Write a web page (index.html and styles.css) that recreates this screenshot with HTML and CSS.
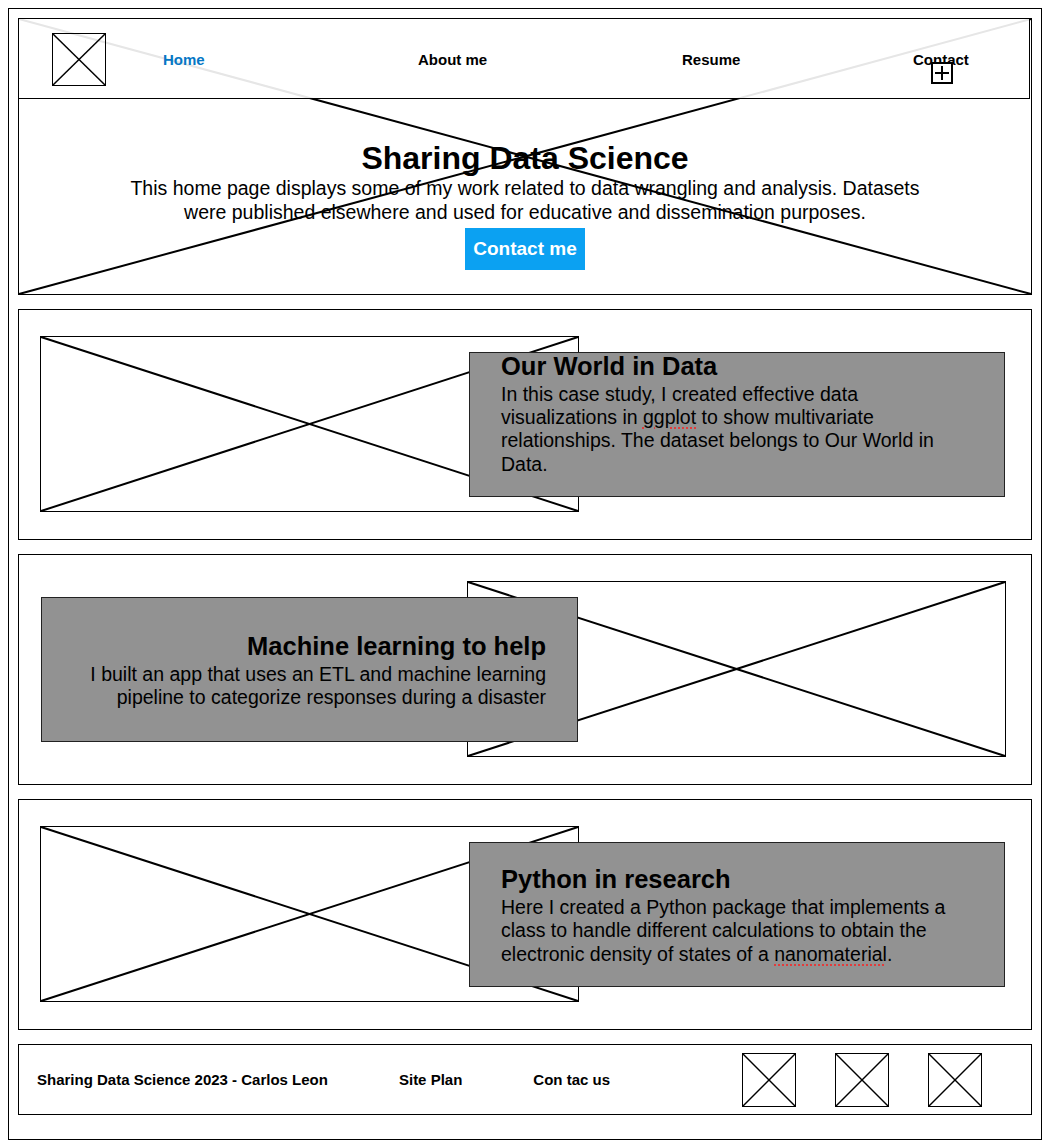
FILE: index.html
```html
<!DOCTYPE html>
<html lang="en">
<head>
    <meta charset="UTF-8">
    <meta name="viewport" content="width=device-width, initial-scale=1.0">
    <title>Sharing Data Science</title>
    <link rel="stylesheet" href="styles.css">
</head>
<body>

    <div class="frame">

        <section class="hero">
            <svg class="cross" viewBox="0 0 100 100" preserveAspectRatio="none">
                <line x1="0" y1="0" x2="100" y2="100" vector-effect="non-scaling-stroke"/>
                <line x1="100" y1="0" x2="0" y2="100" vector-effect="non-scaling-stroke"/>
            </svg>

            <nav class="topnav">
                <a href="#" class="logo ph">
                    <svg class="cross thin" viewBox="0 0 100 100" preserveAspectRatio="none">
                        <line x1="0" y1="0" x2="100" y2="100" vector-effect="non-scaling-stroke"/>
                        <line x1="100" y1="0" x2="0" y2="100" vector-effect="non-scaling-stroke"/>
                    </svg>
                </a>
                <a href="#" class="nav-link active">Home</a>
                <a href="#" class="nav-link">About me</a>
                <a href="#" class="nav-link">Resume</a>
                <a href="#" class="nav-link contact">Contact<span class="plus-box"></span></a>
            </nav>

            <div class="hero-body">
                <h1>Sharing Data Science</h1>
                <p>This home page displays some of my work related to data wrangling and analysis. Datasets were published elsewhere and used for educative and dissemination purposes.</p>
                <a href="#" class="btn">Contact me</a>
            </div>
        </section>

        <section class="project">
            <div class="project-img ph">
                <svg class="cross" viewBox="0 0 100 100" preserveAspectRatio="none">
                    <line x1="0" y1="0" x2="100" y2="100" vector-effect="non-scaling-stroke"/>
                    <line x1="100" y1="0" x2="0" y2="100" vector-effect="non-scaling-stroke"/>
                </svg>
            </div>
            <div class="panel panel-top">
                <h2>Our World in Data</h2>
                <p>In this case study, I created effective data visualizations in <span class="typo">ggplot</span> to show multivariate relationships. The dataset belongs to Our World in Data.</p>
            </div>
        </section>

        <section class="project flip">
            <div class="project-img ph">
                <svg class="cross" viewBox="0 0 100 100" preserveAspectRatio="none">
                    <line x1="0" y1="0" x2="100" y2="100" vector-effect="non-scaling-stroke"/>
                    <line x1="100" y1="0" x2="0" y2="100" vector-effect="non-scaling-stroke"/>
                </svg>
            </div>
            <div class="panel">
                <h2>Machine learning to help</h2>
                <p>I built an app that uses an ETL and machine learning pipeline to categorize responses during a disaster</p>
            </div>
        </section>

        <section class="project">
            <div class="project-img ph">
                <svg class="cross" viewBox="0 0 100 100" preserveAspectRatio="none">
                    <line x1="0" y1="0" x2="100" y2="100" vector-effect="non-scaling-stroke"/>
                    <line x1="100" y1="0" x2="0" y2="100" vector-effect="non-scaling-stroke"/>
                </svg>
            </div>
            <div class="panel">
                <h2>Python in research</h2>
                <p>Here I created a Python package that implements a class to handle different calculations to obtain the electronic density of states of a <span class="typo">nanomaterial</span>.</p>
            </div>
        </section>

        <footer class="footer">
            <span class="foot-link">Sharing Data Science 2023 - Carlos Leon</span>
            <a href="#" class="foot-link">Site Plan</a>
            <a href="#" class="foot-link">Con tac us</a>
            <div class="socials">
                <a href="#" class="social ph">
                    <svg class="cross thin" viewBox="0 0 100 100" preserveAspectRatio="none">
                        <line x1="0" y1="0" x2="100" y2="100" vector-effect="non-scaling-stroke"/>
                        <line x1="100" y1="0" x2="0" y2="100" vector-effect="non-scaling-stroke"/>
                    </svg>
                </a>
                <a href="#" class="social ph">
                    <svg class="cross thin" viewBox="0 0 100 100" preserveAspectRatio="none">
                        <line x1="0" y1="0" x2="100" y2="100" vector-effect="non-scaling-stroke"/>
                        <line x1="100" y1="0" x2="0" y2="100" vector-effect="non-scaling-stroke"/>
                    </svg>
                </a>
                <a href="#" class="social ph">
                    <svg class="cross thin" viewBox="0 0 100 100" preserveAspectRatio="none">
                        <line x1="0" y1="0" x2="100" y2="100" vector-effect="non-scaling-stroke"/>
                        <line x1="100" y1="0" x2="0" y2="100" vector-effect="non-scaling-stroke"/>
                    </svg>
                </a>
            </div>
        </footer>

    </div>

</body>
</html>
```

FILE: styles.css
```css
* {
    box-sizing: border-box;
}

body {
    margin: 8px;
    font-family: 'Liberation Sans', Arial, Helvetica, sans-serif;
    color: #000;
    background: #fff;
}

a {
    color: inherit;
    text-decoration: none;
}

.frame {
    border: 1px solid #000;
    padding: 9px 9px 24px 9px;
    display: flex;
    flex-direction: column;
    gap: 14px;
}

/* placeholder boxes (the crossed rectangles of the wireframe) */
.ph {
    position: relative;
    border: 1px solid #000;
    display: block;
}

.cross {
    position: absolute;
    top: 0;
    left: 0;
    width: 100%;
    height: 100%;
    overflow: visible;
}

.cross line {
    stroke: #000;
    stroke-width: 2;
}

.cross.thin line {
    stroke-width: 1.5;
}

/* hero */
.hero {
    position: relative;
    height: 277px;
    border: 1px solid #000;
}

.topnav {
    position: relative;
    z-index: 1;
    height: 81px;
    margin: -1px 1px 0 -1px;
    border: 1px solid #000;
    background: rgba(255, 255, 255, 0.9);
    display: grid;
    grid-template-columns: 111px 255px 264px 231px auto;
    align-items: center;
    padding: 2px 0 0 33px;
}

.logo {
    width: 54px;
    height: 53px;
}

.nav-link {
    font-size: 15px;
    font-weight: 700;
    justify-self: start;
}

.nav-link.active {
    color: #0677c5;
}

.contact {
    position: relative;
}

.plus-box {
    position: absolute;
    left: 18px;
    top: 11px;
    width: 22px;
    height: 22px;
    border: 2px solid #000;
    background: #fff;
}

.plus-box::before,
.plus-box::after {
    content: '';
    position: absolute;
    background: #000;
}

.plus-box::before {
    left: 2px;
    right: 2px;
    top: 8px;
    height: 2px;
}

.plus-box::after {
    top: 2px;
    bottom: 2px;
    left: 8px;
    width: 2px;
}

.hero-body {
    position: relative;
    z-index: 1;
    text-align: center;
    padding-top: 41px;
}

.hero-body h1 {
    margin: 0;
    font-size: 32px;
    line-height: 36px;
    font-weight: 700;
}

.hero-body p {
    margin: 0 auto;
    max-width: 800px;
    font-size: 19.5px;
    line-height: 24px;
}

.btn {
    display: inline-block;
    margin-top: 4px;
    height: 42px;
    line-height: 42px;
    padding: 0 8px;
    background: #0ba1f2;
    color: #fff;
    font-size: 19px;
    font-weight: 700;
}

/* project cards */
.project {
    border: 1px solid #000;
    height: 231px;
    padding: 26px 26px 27px 21px;
    display: grid;
    grid-template-columns: 429px 110px 1fr;
    align-items: center;
}

.project-img {
    grid-row: 1;
    grid-column: 1 / 3;
    height: 176px;
}

.panel {
    position: relative;
    z-index: 1;
    grid-row: 1;
    grid-column: 2 / 4;
    height: 145px;
    background: #929292;
    border: 1px solid #222;
    padding: 4px 42px 0 31px;
    display: flex;
    flex-direction: column;
    justify-content: center;
}

.panel-top {
    justify-content: flex-start;
    padding-top: 0;
}

.panel h2 {
    margin: 0;
    font-size: 25.5px;
    line-height: 27px;
    font-weight: 700;
}

.panel p {
    margin: 3px 0 0;
    font-size: 19.5px;
    line-height: 23.4px;
}

.project.flip {
    padding: 26px 25px 27px 22px;
    grid-template-columns: 426px 111px 1fr;
}

.project.flip .project-img {
    grid-column: 2 / 4;
}

.project.flip .panel {
    grid-column: 1 / 3;
    text-align: right;
    padding: 4px 31px 0 38px;
}

.typo {
    text-decoration: underline dotted #e23b3b;
    text-underline-offset: 4px;
}

/* footer */
.footer {
    border: 1px solid #000;
    height: 71px;
    padding: 0 49px 0 18px;
    display: flex;
    align-items: center;
    gap: 71px;
}

.foot-link {
    font-size: 15px;
    font-weight: 700;
}

.socials {
    margin-left: auto;
    display: flex;
    gap: 39px;
}

.social {
    width: 54px;
    height: 54px;
}
```
